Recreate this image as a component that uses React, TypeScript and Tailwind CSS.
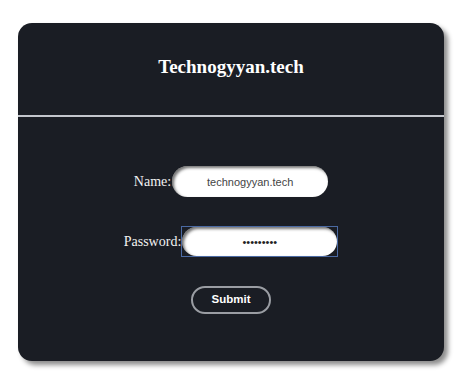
import { useState } from 'react';

const serif = "font-['Liberation_Serif','Times_New_Roman',serif]";
const sans = "font-['Liberation_Sans',Arial,sans-serif]";

export default function App() {
    const [name, setName] = useState('technogyyan.tech');
    const [password, setPassword] = useState('123456789');

    return (
        <div className="min-h-[383px] bg-white pl-[18px] pt-[23px]">
            <div className="h-[338px] w-[426px] overflow-hidden rounded-[14px] bg-[#1a1d24] shadow-[4px_4px_5px_rgba(0,0,0,0.45)]">
                <div className="flex h-[92px] justify-center pt-[33px]">
                    <h2 className={`${serif} text-[19px] font-bold leading-[22px] text-white`}>
                        Technogyyan.tech
                    </h2>
                </div>
                <div className="h-[2px] bg-[#c3c6cc]" />

                <form className="flex flex-col items-center pt-[49px]" onSubmit={(e) => e.preventDefault()}>
                    <div className="flex items-center gap-[1px]">
                        <label className={`${serif} text-[14px] text-[#f2f2f2]`}>Name:</label>
                        <input
                            value={name}
                            onChange={(e) => setName(e.target.value)}
                            className={`${sans} h-[31px] w-[156px] rounded-full bg-white text-center text-[11px] text-[#444] shadow-[inset_2px_2px_3px_rgba(0,0,0,0.55)] outline-none`}
                        />
                    </div>

                    <div className="mt-[29px] flex items-center gap-0">
                        <label className={`${serif} text-[14px] text-[#f2f2f2]`}>Password:</label>
                        <div className="border-[1.5px] border-[#4b6aa3]">
                            <input
                                type="password"
                                value={password}
                                onChange={(e) => setPassword(e.target.value)}
                                className={`${sans} block h-[29px] w-[155px] rounded-full bg-white text-center text-[11px] text-[#222] shadow-[inset_2px_2px_3px_rgba(0,0,0,0.55)] outline-none`}
                            />
                        </div>
                    </div>

                    <button
                        type="submit"
                        className={`${sans} mt-[29px] h-[28px] w-[80px] rounded-full border-2 border-[#9a9da3] text-[11.5px] font-bold text-white`}
                    >
                        Submit
                    </button>
                </form>
            </div>
        </div>
    );
}
